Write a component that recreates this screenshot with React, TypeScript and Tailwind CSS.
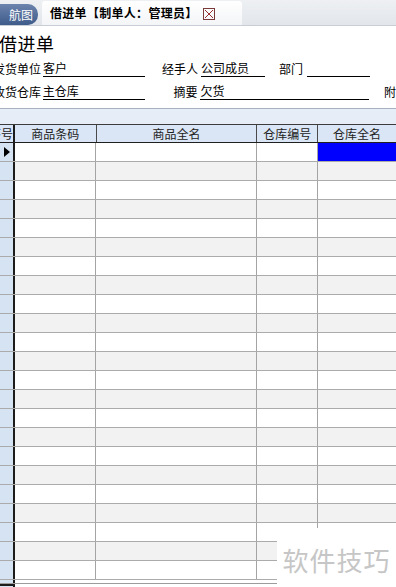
import React from 'react';

const cols = [
  { key: 'barcode', title: '商品条码', w: 'w-[82px]' },
  { key: 'name', title: '商品全名', w: 'w-[161px]' },
  { key: 'whno', title: '仓库编号', w: 'w-[61px]' },
  { key: 'whname', title: '仓库全名', w: 'w-[78px]' },
];

const rows = Array.from({ length: 23 }, (_, i) => i);

const Field: React.FC<{ value?: string; w: string; ml?: string }> = ({ value, w, ml = '' }) => (
  <div className={`${w} ${ml} h-full border-b border-black leading-[16px] whitespace-nowrap`}>{value}</div>
);

export default function App() {
  return (
    <div
      className="relative w-[396px] h-[587px] overflow-hidden bg-white text-[12px] text-black"
      style={{ fontFamily: '"Noto Sans CJK SC", "Noto Sans", sans-serif' }}
    >
      {/* top tab bar */}
      <div className="flex h-[26px] items-end bg-gradient-to-b from-[#eef0f3] to-[#e2e6eb] border-b border-[#c9ced6]">
        <div className="flex h-[21px] w-[38px] items-center justify-end rounded-r-[10px] bg-gradient-to-b from-[#6b84ad] to-[#3f5b8a] pr-[5px] text-[12px] text-white">
          航图
        </div>
        <div className="ml-[4px] flex h-[24px] w-[200px] items-center gap-[5px] rounded-t-[3px] bg-gradient-to-b from-white to-[#f4f5f7] pl-[8px]">
          <span className="font-bold tracking-[0.3px]">借进单【制单人：管理员】</span>
          <svg width="12" height="12" viewBox="0 0 12 12" className="mt-[1px]">
            <rect x="0.5" y="0.5" width="11" height="11" fill="none" stroke="#7a3a3a" />
            <path d="M2 2 L10 10 M10 2 L2 10" stroke="#9a3030" strokeWidth="1" />
          </svg>
        </div>
      </div>

      {/* bill title */}
      <div className="h-[34px] ml-[-1px] text-[18px] leading-[34px] tracking-[0.5px]">借进单</div>

      {/* form rows */}
      <div className="flex h-[17px] items-end">
        <span className="ml-[-7px] w-[50px] leading-[16px] whitespace-nowrap">发货单位</span>
        <Field value="客户" w="w-[102px]" />
        <span className="ml-[17px] w-[37px] leading-[16px]">经手人</span>
        <Field value="公司成员" w="w-[64px]" ml="ml-[2px]" />
        <span className="ml-[14px] w-[28px] leading-[16px]">部门</span>
        <Field w="w-[63px]" />
      </div>
      <div className="mt-[6px] flex h-[17px] items-end">
        <span className="ml-[-7px] w-[50px] leading-[16px] whitespace-nowrap">收货仓库</span>
        <Field value="主仓库" w="w-[102px]" />
        <span className="ml-[29px] w-[25px] leading-[16px]">摘要</span>
        <Field value="欠货" w="w-[169px]" ml="ml-[2px]" />
        <span className="ml-[15px] leading-[16px]">附</span>
      </div>

      {/* grid */}
      <div className="mt-[8px] border-t border-[#a9b2bf] h-[16px] bg-[#e6edf7]" />
      <div className="flex h-[19px] border-t border-[#3c3c3c] border-b border-b-[#202020] bg-[#dae6f5] text-[#222]">
        <div className="w-[15px] overflow-hidden border-r-2 border-[#1c1c1c] text-right leading-[17px] whitespace-nowrap flex justify-end">
          <span className="shrink-0">序号</span>
        </div>
        {cols.map((c) => (
          <div key={c.key} className={`${c.w} border-r border-[#4a4a4a] text-center leading-[17px] last:border-r-0`}>
            {c.title}
          </div>
        ))}
      </div>
      {rows.map((i) => (
        <div key={i} className={`flex h-[19px] border-b border-[#ababab] ${i % 2 ? 'bg-[#f2f2f2]' : 'bg-white'}`}>
          <div className="flex w-[15px] items-center justify-center border-r-2 border-[#1c1c1c] bg-[#d6e3f3]">
            {i === 0 && (
              <svg width="6" height="10" viewBox="0 0 6 10">
                <path d="M0 0 L6 5 L0 10 Z" fill="#000" />
              </svg>
            )}
          </div>
          <div className="w-[81px] border-r border-[#a4a4a4]" />
          <div className="w-[161px] border-r border-[#a4a4a4]" />
          <div className="w-[61px] border-r border-[#a4a4a4]" />
          <div className={`w-[78px] ${i === 0 ? 'bg-[#0000ff]' : ''}`} />
        </div>
      ))}
      <div className="flex h-[4px] border-b border-[#9c9c9c]">
        <div className="w-[15px] border-r-2 border-[#1c1c1c] bg-[#d6e3f3]" />
      </div>
      <div className="flex h-[12px]">
        <div className="w-[15px] border-t-2 border-r-2 border-[#1c1c1c] bg-[#d6e3f3]" />
      </div>

      {/* watermark */}
      <div className="absolute left-[277px] top-[528px] flex h-[59px] w-[119px] items-center justify-center bg-white pt-[3px] text-[26px] tracking-[1px] text-[#c6c6c6]">
        软件技巧
      </div>
    </div>
  );
}
